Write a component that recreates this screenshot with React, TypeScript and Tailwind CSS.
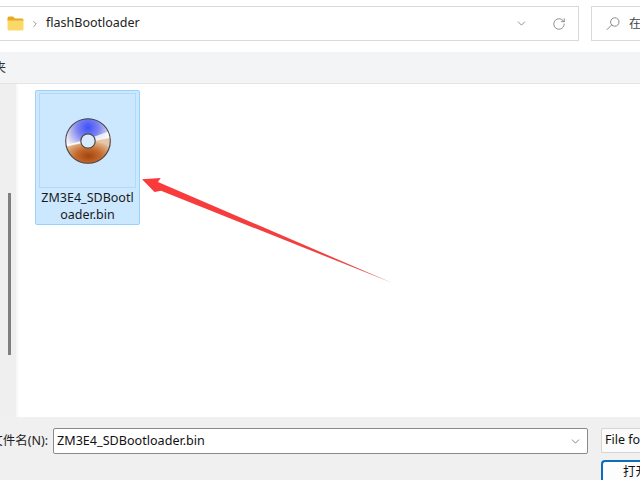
import React from "react";
import { ChevronDown, ChevronRight, RotateCw } from "lucide-react";

const uiFont = "font-['Noto_Sans','Noto_Sans_CJK_SC',sans-serif]";

function DiscIcon() {
  return (
    <svg width="48" height="48" viewBox="0 0 48 48">
      <defs>
        <radialGradient id="discBlue" cx="0.5" cy="0.2" r="0.6">
          <stop offset="0" stopColor="#3f50f8" />
          <stop offset="0.4" stopColor="#7c84f0" />
          <stop offset="0.78" stopColor="#d6d4ee" />
          <stop offset="1" stopColor="#ffffff" />
        </radialGradient>
        <radialGradient id="discCopper" cx="0.5" cy="0.72" r="0.6">
          <stop offset="0" stopColor="#a2450f" />
          <stop offset="0.45" stopColor="#c4682c" />
          <stop offset="0.85" stopColor="#dba77c" />
          <stop offset="1" stopColor="#e6c7a8" />
        </radialGradient>
      </defs>
      <circle cx="24" cy="24" r="22.5" fill="url(#discBlue)" />
      <path d="M24 24 L46.4 20 A22.5 22.5 0 0 1 24 46.5 A22.5 22.5 0 0 1 2 29 Z" fill="url(#discCopper)" />
      <path d="M2.2 28 L24 22 L45.6 14 L46.5 21 L24 25 L2.4 29.5 Z" fill="#ffffff" opacity="0.8" />
      <circle cx="24" cy="24" r="22.3" fill="none" stroke="#4a4646" strokeWidth="1.1" />
      <circle cx="24" cy="24" r="7.2" fill="#d9ecfd" stroke="#4e4a4a" strokeWidth="1.2" />
    </svg>
  );
}

function FolderIcon() {
  return (
    <svg width="17" height="15" viewBox="0 0 17 15">
      <path d="M0.5 2 Q0.5 0.5 2 0.5 H6 L8 2.5 H15 Q16.5 2.5 16.5 4 V5 H0.5 Z" fill="#e8a823" />
      <path d="M0.5 4.5 H16.5 V13 Q16.5 14.5 15 14.5 H2 Q0.5 14.5 0.5 13 Z" fill="#fbd968" />
    </svg>
  );
}

function SearchGlass() {
  return (
    <svg width="14" height="14" viewBox="0 0 14 14" fill="none" stroke="#8a8a8a" strokeWidth="1">
      <circle cx="8.8" cy="5" r="4.2" />
      <path d="M5.6 8 L1 12.6" strokeLinecap="round" />
    </svg>
  );
}

export default function App() {
  return (
    <div className={`relative flex h-[480px] w-[640px] flex-col overflow-hidden bg-white ${uiFont}`}>
      {/* address bar */}
      <div className="flex h-[52px] shrink-0 items-start pt-[6px]">
        <div className="flex h-[35px] w-[579px] shrink-0 items-center border-y border-r border-[#d9d9d9] pl-[7px] pr-[12px]">
          <FolderIcon />
          <ChevronRight size={10} strokeWidth={1.5} className="ml-[6px] text-[#555]" />
          <span className="ml-[6px] text-[12.5px] text-[#222]">flashBootloader</span>
          <ChevronDown size={13} strokeWidth={1.2} className="ml-auto text-[#555]" />
          <RotateCw size={14} strokeWidth={1.2} className="ml-[24px] text-[#666]" />
        </div>
        <div className="ml-[12px] flex h-[35px] flex-1 items-center border-y border-l border-[#d9d9d9] pl-[14px]">
          <SearchGlass />
          <span className="ml-[9px] text-[12px] text-[#444]">在</span>
        </div>
      </div>

      {/* command bar */}
      <div className="flex h-[32px] shrink-0 items-center border-b border-[#e4e4e4] bg-[#f3f4f6]">
        <span className="-ml-[6px] text-[12px] text-[#333]">夹</span>
      </div>

      {/* nav strip and file list */}
      <div className="flex min-h-0 flex-1">
        <div className="w-[18px] shrink-0 border-r-2 border-[#f8f8f8] bg-[#efefef] pt-[109px]">
          <div className="ml-[8px] h-[162px] w-[3px] bg-[#7f7f7f]" />
        </div>
        <div className="flex-1 pl-[17px] pt-[6px]">
          <div className="h-[135px] w-[105px] rounded-[2px] border border-[#99d1ff] bg-[#cce8ff] px-[3px] pt-[2px]">
            <div className="flex h-[95px] items-center justify-center border border-[#b3d9f5]">
              <DiscIcon />
            </div>
            <p className="mt-[1px] text-center text-[12.5px] leading-[17px] text-[#1a1a1a]">
              ZM3E4_SDBootl
              <br />
              oader.bin
            </p>
          </div>
        </div>
      </div>

      {/* file name row */}
      <div className="h-[63px] shrink-0 bg-[#f0f0f0] pt-[11px]">
        <div className="flex items-start">
          <div className="flex h-[26px] w-[48px] shrink-0 items-center justify-end overflow-hidden whitespace-nowrap text-[12.5px] text-[#222]">
            文件名(N):
          </div>
          <div className="ml-[5px] flex h-[26px] w-[535px] shrink-0 items-center rounded-[2px] border border-[#8a8a8a] bg-white pl-[3px] pr-[5px] text-[12.6px] text-[#111]">
            ZM3E4_SDBootloader.bin
            <ChevronDown size={13} strokeWidth={1.3} className="ml-auto text-[#555]" />
          </div>
          <div className="ml-[13px] flex w-[60px] shrink-0 flex-col">
            <div className="flex h-[25px] items-center overflow-hidden whitespace-nowrap rounded-l-[2px] border-y border-l border-[#d5d5d5] bg-[#fbfbfb] pl-[3px] text-[12.5px] text-[#111]">
              File for
            </div>
            <div className="mt-[7px] flex h-[30px] items-start overflow-hidden whitespace-nowrap rounded-tl-[4px] border-l-2 border-t-2 border-[#0b6fb8] bg-[#fdfdfd] pl-[20px] pt-[1px] text-[12.5px] text-[#111]">
              打开
            </div>
          </div>
        </div>
      </div>

      {/* annotation arrow */}
      <svg className="pointer-events-none absolute left-0 top-0" width="640" height="480" viewBox="0 0 640 480">
        <defs>
          <linearGradient id="arrowFill" x1="142" y1="179" x2="392" y2="283" gradientUnits="userSpaceOnUse">
            <stop offset="0" stopColor="#fb3a3a" />
            <stop offset="0.75" stopColor="#f04040" />
            <stop offset="1" stopColor="#d96a6a" />
          </linearGradient>
        </defs>
        <polygon points="142,179.3 160.7,178 158,182 392.5,283 161,190.8 154.5,192" fill="url(#arrowFill)" />
      </svg>
    </div>
  );
}
